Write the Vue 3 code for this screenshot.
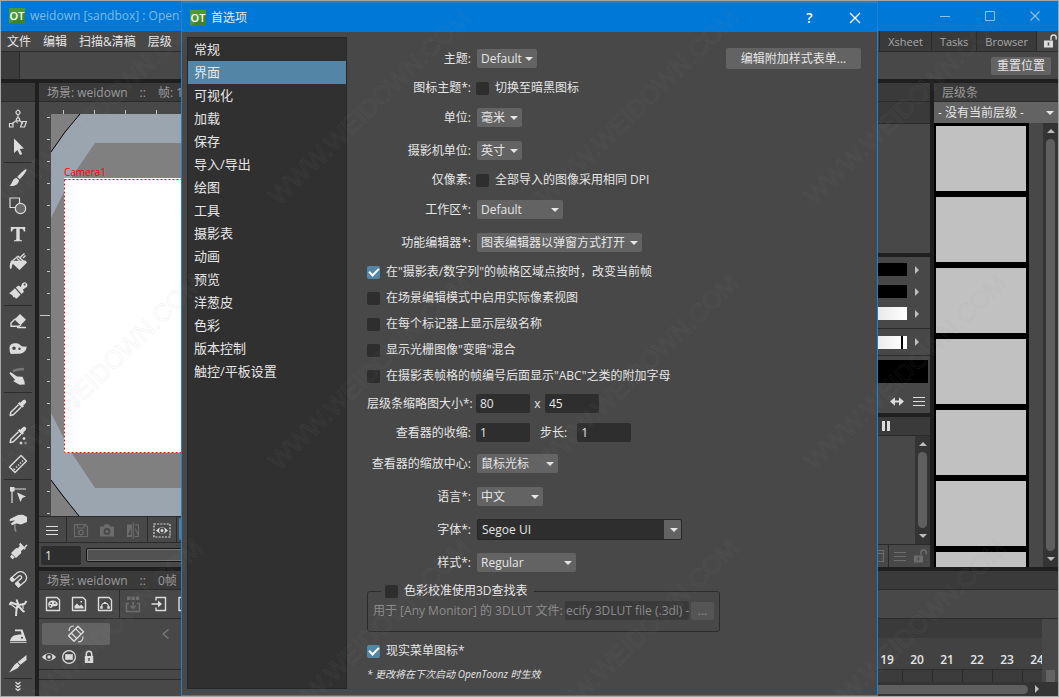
<script setup>
import { h, ref } from 'vue'

const F = '#dcdcdc'
const D = '#6c6c6c'
const s = (d, w = 1.2, c = F) => ['path', { d, fill: 'none', stroke: c, 'stroke-width': w, 'stroke-linejoin': 'round' }]
const f = (d, c = F) => ['path', { d, fill: c, 'fill-rule': 'evenodd' }]
const o = (cx, cy, r, w = 1.2, c = F, fill = 'none') => ['circle', { cx, cy, r, fill, stroke: c, 'stroke-width': w }]

const glyphs = {
  animate: [o(10, 3.5, 2), s('M10 5.5V9'), o(10, 10.5, 1.7), s('M8.5 11.5L3.5 15M11.7 11.5L15 14.5M10 0.5V2'), s('M1.5 14.5H5V18H1.5Z'), s('M14.5 12.5H18.5L16.5 18H12.5Z'), s('M8.5 12C8 13 9 14 10 14', 1)],
  select: [f('M6 1.5L16 11.5L11.8 12L14.2 17L12 18L9.5 13L6 16Z')],
  brush: [f('M18.3 1.3C19.5 2.5 14.5 8.5 11.8 11.2L9.3 8.8C12 6 17.3 0.4 18.3 1.3ZM8.5 9.8L11 12.3C11 15.5 7 19.2 1.5 17.8C4.5 16.5 3.5 11 8.5 9.8Z')],
  geometry: [s('M2 2H11.5V11.5H2Z'), o(12.5, 12.5, 5.2, 1.2, F, '#6a6a6a')],
  type: [f('M2.8 3H17.2V7.5H15.8C15.5 5.3 14.5 4.8 11.7 4.8V15C11.7 16 12.5 16.3 14 16.3V17.3H6V16.3C7.5 16.3 8.3 16 8.3 15V4.8C5.5 4.8 4.5 5.3 4.2 7.5H2.8Z')],
  fill: [f('M3 8.5C8 9.5 13 8 17.5 8.5L19 10.5L11.5 18L5 12C3.5 12.5 4.5 15.5 3 17C1.5 17 1.2 14 3 8.5Z'), s('M4.5 8.8L10 4.2L17.5 11M9 6.5L12 9M11.5 6L16.5 1.5M15 6L17.5 3.5', 1.4)],
  paint: [f('M18.5 3.2A2.6 2.6 0 0 0 14.2 3.6L12.7 7L10.5 5.5L7.8 7.5L13.5 14L16 11.8L14.8 9.7L17.5 7.8A2.6 2.6 0 0 0 18.5 3.2ZM16.5 3.5A1 1 0 1 1 15.8 5A1 1 0 0 1 16.5 3.5ZM6.9 8.3L12.6 14.8C10.8 16.2 10 18 8 18.8L6.5 17L5.5 17.5L4.6 15.5L1 13C3.5 12.5 4.5 10 6.9 8.3Z')],
  eraser: [f('M12 3L18 8.8L13 13.8L7 8Z'), s('M7 8L3 12V15.2H11L13 13.8M9 16.5H18M7 8L13 13.8', 1.4)],
  tape: [f('M1.5 9C1.5 5 5 3.8 9 4.2C12 4.5 12.5 7.5 15 7.5L19 7.8L18.3 9C18 13 14 14.5 11 14.8L3 15C1.8 14 1.5 11.5 1.5 9ZM6 7.5A1.8 1.8 0 1 0 6 11.1A1.8 1.8 0 1 0 6 7.5ZM11.5 8.5A1.2 1.2 0 1 0 11.5 10.9A1.2 1.2 0 1 0 11.5 8.5Z')],
  finger: [f('M2.5 5L9 9.5L14.5 9.8L16.5 14.5L16.8 17.5L11.5 17.8L5 14L7.2 13L1.5 6.5Z'), s('M5 4.5C8 2 12 2.5 16 2', 2.4, '#777777')],
  picker: [f('M17.5 2.2C19.2 4 17.5 5.8 15.2 7.2L16 8.2L14 9.8L9.8 5.6L11.5 4L12.5 4.8C14 2.5 16 0.8 17.5 2.2Z'), s('M10.5 6.7L2.8 14.3L2.2 17.4L5.3 16.8L13 9.2', 1.5)],
  rgbpicker: [f('M17.5 1.2C19.2 3 17.5 4.8 15.2 6.2L16 7.2L14 8.8L9.8 4.6L11.5 3L12.5 3.8C14 1.5 16 -0.2 17.5 1.2Z'), s('M10.5 5.7L2.8 13.3L2.2 16.4L5.3 15.8L13 8.2', 1.5), o(16, 12.5, 1, 1, F, F), o(13, 17, 1, 1, F, F), o(17.5, 17, 1, 1, '#888888', '#888888')],
  ruler: [s('M13 1.5L18.5 7L7 18.5L1.5 13Z', 1.4), s('M5.5 14.5L7 16M8 12.5L9.2 13.7M10 10.5L11.2 11.7M12 8.5L13.2 9.7M14 6.5L15.2 7.7', 1.1)],
  control: [s('M4 4H18M4 4V18', 1.2), f('M2 2H6.5V6.5H2Z'), f('M9 7.5L18 11.5L14.3 13L12.5 17Z')],
  pinch: [f('M19 4L15 1.8L10 2L2 6L1.5 8.2L7 7.2L2.8 10.8L4 12.2L8.5 10.5L13 11.5L19 9Z'), s('M6.5 11C8 13 5.5 15 8 18.5', 1.7, '#858585')],
  pump: [f('M12.3 1.8L17.8 7.5L16.4 8.8L15.4 7.9L13 10.2L13.3 12L8 17L3 12L8.2 7L9.8 7.2L12 4.8L11 3.3ZM3.7 13.5L6.8 16.5L4.5 18.2L2 15.7Z'), s('M16.5 6.5L19 4', 1.5)],
  magnet: [s('M2.5 9.5L9.5 3.5A6 6 0 0 1 17.5 12L10.5 18L7.5 14.5L13.5 9.2A1.8 1.8 0 0 0 11.2 6.8L5.2 12Z', 1.3), f('M1.5 10.3L4.5 7.8L7 10.8L4 13.3ZM6.8 14.6L9.8 12.2L12.8 15.6L10 18.2Z')],
  bender: [s('M8.5 2.5L10.5 8L16.5 7L18.5 4M10.5 8L3 5.5L1.5 8M9.5 8L8.5 12.5L8 19M10.5 9L15 14L16.5 15', 2), s('M2 6.5L9 12M15 6V12', 1.2)],
  iron: [f('M7 4.5H14.5L18.5 16H2C3 11.5 5.5 9.5 13.5 9.5L12.8 6.2H7ZM13 12V13.5H15V12Z'), s('M2 17.3H18.5', 1)],
  cutter: [f('M18.5 2V7L12.5 11.8L9.8 9ZM9.2 9.6L11.9 12.4L9.5 15.2L1 19.5L6.3 12Z')],
  chevrons: [s('M7.5 5L10 7.2L12.5 5M7.5 8.2L10 10.4L12.5 8.2M7.5 11.4L10 13.6L12.5 11.4', 1.3)],
  menu: [s('M4 6.5H16M4 10.5H16M4 14.5H16', 1.2)],
  menuDim: [s('M4 6.5H16M4 10.5H16M4 14.5H16', 1.2, D)],
  save: [s('M3.5 4.5H14L16.5 7V16.5H3.5ZM6.5 4.5V8H13V4.5', 1.2, D), o(10, 12.5, 2.3, 1.2, D)],
  camera: [f('M3 6.5H6.5L8 4.2H12L13.5 6.5H17V16.5H3ZM10 8A3.4 3.4 0 1 0 10 14.8A3.4 3.4 0 1 0 10 8ZM10 9.8A1.6 1.6 0 1 1 10 13A1.6 1.6 0 1 1 10 9.8Z', D)],
  compare: [f('M4 4.5H9V17H4ZM8 8L5 15H8Z', D), s('M11.5 5H15.5V16.5H11.5M10.3 2.5V18.5M12 8.5L15.5 15.5', 1.1, D)],
  safeEye: [['rect', { x: 2, y: 4, width: 16, height: 13, fill: 'none', stroke: F, 'stroke-width': 1.2, 'stroke-dasharray': '2 1.2' }], f('M4 10.5Q10 3.5 16 10.5Q10 17 4 10.5ZM10 7.6A2.9 2.9 0 1 0 10 13.4A2.9 2.9 0 1 0 10 7.6ZM10 9A1.5 1.5 0 1 1 10 12A1.5 1.5 0 1 1 10 9Z')],
  newPalette: [s('M3.5 3.5H14L16.5 6V16.5H3.5Z', 1.4), f('M10 6.5C6.8 6.5 5 8.5 5.3 11C5.5 13.5 8 14.5 9 13.5C9.5 13 9 12 10.5 12.2C13 12.5 14.8 12 14.8 10C14.5 7.8 12.5 6.5 10 6.5ZM7.4 8.5H9V10H7.4ZM11 8.5H12.5V10H11ZM6.5 11H8V12.5H6.5Z')],
  newRaster: [s('M3.5 3.5H14L16.5 6V16.5H3.5Z', 1.4), f('M5.5 14.5V12L8 9.5L10.5 12L12.2 10.5L14.5 13V14.5ZM11.5 7H13V8.5H11.5Z')],
  newVector: [s('M3.5 3.5H14L16.5 6V16.5H3.5Z', 1.4), s('M6.5 13.5C6.5 7.5 13.5 7.5 13.5 13.5', 1.1), f('M5.2 12.2H7.7V14.7H5.2ZM12.3 12.2H14.8V14.7H12.3ZM9 8H11V10H9Z')],
  dropDown: [f('M4 2.5H7.5V6H4ZM8.5 2.5H11.8V6H8.5ZM12.8 2.5H16.2V6H12.8Z', D), s('M6 9.5H3.5V17.5H16.5V9.5H14M10 8V14M7.5 11.8L10 14.3L12.5 11.8', 1.5, D)],
  intoBox: [s('M7 6.5V3.5H16.5V16.5H7V13.5M2.5 10H10', 1.4), f('M9 6.5L13 10L9 13.5Z')],
  sheet: [s('M4 3.5H13L16.5 6V16.5H4Z', 1.4)],
  flip: [s('M12 2.2L17.5 7.7L8 17.2L2.5 11.7Z', 1.4), s('M9.5 4.7L15 10.2M5.2 9L10.8 14.6M3 7C3 4 5 2 8 2M17 12.5C17 16 15 18 12 18', 1.2)],
  eye: [f('M3 10Q10 2.5 17 10Q10 17.5 3 10ZM10 6.7A3.3 3.3 0 1 0 10 13.3A3.3 3.3 0 1 0 10 6.7ZM10 8.3A1.7 1.7 0 1 1 10 11.7A1.7 1.7 0 1 1 10 8.3Z')],
  camstand: [o(10, 10, 6.4, 1.3), f('M6.2 7.2H13.8V12.8H6.2Z')],
  lock: [f('M5.8 9H14.2V16H5.8ZM9.3 11V14H10.7V11Z'), s('M7.3 9V7A2.7 2.7 0 0 1 12.7 7V9', 1.5)],
  unlock: [f('M4 9.5H13V16.5H4ZM7.7 11.5V14.5H9.2V11.5Z'), s('M11 9V6.5A2.6 2.6 0 0 1 16.2 6.5V8.5', 1.5)],
  unlockDim: [f('M4 9.5H13V16.5H4ZM7.7 11.5V14.5H9.2V11.5Z', D), s('M11 9V6.5A2.6 2.6 0 0 1 16.2 6.5V8.5', 1.5, D)],
  tableDim: [s('M3.5 4.5H15.5V15.5H3.5ZM3.5 7.5H15.5M9.5 4.5V7.5', 1.2, D)],
  spread: [f('M3 10.5L8 6.2V9.6H12V6.2L17 10.5L12 14.8V11.4H8V14.8Z')],
  pause: [f('M6 5H9V15H6ZM11 5H14V15H11Z')],
  previous: [s('M12.5 5.5L7 10L12.5 14.5', 1.4, '#7a7a7a')],
  minimize: [s('M5 10.5H15', 1, '#8fc3f0')],
  maximize: [s('M5.5 5.5H14.5V14.5H5.5Z', 1, '#8fc3f0')],
  closeDim: [s('M5.5 5.5L14.5 14.5M14.5 5.5L5.5 14.5', 1.1, '#8fc3f0')],
  close: [s('M5 5L15 15M15 5L5 15', 1.3, '#ffffff')],
}

const Icon = (p) =>
  h('svg', { viewBox: '0 0 20 20', width: 20, height: 20, 'aria-hidden': 'true' }, glyphs[p.name].map(([tag, attrs]) => h(tag, attrs)))
Icon.props = ['name']

const toolGroups = [
  ['animate', 'select'],
  ['brush', 'geometry', 'type', 'fill', 'paint'],
  ['eraser', 'tape', 'finger'],
  ['picker', 'rgbpicker', 'ruler'],
  ['control', 'pinch', 'pump', 'magnet', 'bender', 'iron', 'cutter'],
  ['chevrons'],
]
const menus = ['文件', '编辑', '扫描&清稿', '层级']
const rooms = ['Xsheet', 'Tasks', 'Browser']
const pages = ['常规', '界面', '可视化', '加载', '保存', '导入/导出', '绘图', '工具', '摄影表', '动画', '预览', '洋葱皮', '色彩', '版本控制', '触控/平板设置']
const current = ref('界面')
const options = ref([
  { text: '在"摄影表/数字列"的帧格区域点按时，改变当前帧', on: true },
  { text: '在场景编辑模式中启用实际像素视图', on: false },
  { text: '在每个标记器上显示层级名称', on: false },
  { text: '显示光栅图像"变暗"混合', on: false },
  { text: '在摄影表帧格的帧编号后面显示"ABC"之类的附加字母', on: false },
])
const topTicks = Array.from({ length: 24 }, (_, i) => 24 + i * 31)
const sideTicks = Array.from({ length: 19 }, (_, i) => 3 + i * 22)
const marks = [205, 470, 735].flatMap((y) => [10, 278, 546, 814].map((x) => ({ x, y })))
</script>

<template>
  <div class="desktop">
    <header class="titlebar">
      <svg class="logo" viewBox="0 0 16 16" aria-hidden="true"><rect width="16" height="16" fill="#4a9a35" /><path d="M0 16L16 5V16Z" fill="#3b8429" /><text x="8" y="12" text-anchor="middle">OT</text></svg>
      <span class="app-name">weidown [sandbox] : OpenToonz</span>
      <button aria-label="Minimize"><Icon name="minimize" /></button>
      <button aria-label="Maximize"><Icon name="maximize" /></button>
      <button aria-label="Close window"><Icon name="closeDim" /></button>
    </header>
    <nav class="menubar">
      <button v-for="m in menus" :key="m" class="menu">{{ m }}</button>
      <span class="grow"></span>
      <button v-for="r in rooms" :key="r" class="room">{{ r }}</button>
      <button class="room-lock" aria-label="Lock rooms"><Icon name="unlock" /></button>
    </nav>
    <div class="options"><span class="grip"></span><button class="btn">重置位置</button></div>

    <div class="workspace">
      <aside class="toolbox">
        <div class="pane-head"></div>
        <div v-for="(g, i) in toolGroups" :key="i" class="tool-group">
          <button v-for="t in g" :key="t" class="tool" :class="{ short: t === 'chevrons' }" :aria-label="t"><Icon :name="t" /></button>
        </div>
      </aside>

      <div class="main">
        <div class="upper">
          <section class="viewer">
            <div class="pane-head"><span>场景: weidown</span><span>::</span><span>帧: 1</span></div>
            <div class="stage">
              <svg class="ruler-top" aria-hidden="true"><path v-for="x in topTicks" :key="x" :d="`M${x}.5 8V12`" stroke="#c8c8c8" /></svg>
              <svg class="ruler-side" aria-hidden="true"><path v-for="y in sideTicks" :key="y" :d="`M${y === 201 ? 1 : 8} ${y}.5H11`" stroke="#c8c8c8" /></svg>
              <svg class="canvas" aria-hidden="true">
                <path d="M29 0L14 18L0 38V104L20 64L44 29H900V0Z" fill="#9aa5b0" />
                <path d="M0 299L20 338L44 374H900V402H28L12 382L0 366Z" fill="#9aa5b0" />
                <path d="M29 0L14 18L0 38M0 366L12 382L28 402" fill="none" stroke="#000" />
                <rect x="13" y="64" width="480" height="275" fill="#fff" />
                <rect x="13.5" y="65.5" width="480" height="273" fill="none" stroke="#f00" stroke-dasharray="2 2" />
                <text x="13" y="62" class="cam">Camera1</text>
              </svg>
            </div>
            <div class="view-tools">
              <span class="cell"><button aria-label="Menu"><Icon name="menu" /></button></span>
              <span class="cell"><button v-for="n in ['save', 'camera', 'compare']" :key="n" :aria-label="n"><Icon :name="n" /></button></span>
              <span class="cell"><button aria-label="Safe area"><Icon name="safeEye" /></button></span>
              <button class="active" aria-label="Camera view"></button>
            </div>
            <div class="framebar"><input class="field" aria-label="Frame" value="1" /><span class="slider"></span></div>
          </section>

          <section class="style-col">
            <div class="style-pane">
              <div class="pane-head"></div>
              <div class="tabs"></div>
              <div class="wheel"></div>
            </div>
            <div class="sliders">
              <div class="chan"><i class="black"></i><b></b></div>
              <div class="chan"><i class="black"></i><b></b></div>
              <div class="chan"><i class="white"></i><b></b></div>
              <div class="chan split"><i class="white knob"></i><b></b></div>
              <div class="swatch"></div>
              <div class="pal-tools"><Icon name="spread" /><Icon name="menu" /></div>
            </div>
            <div class="palette">
              <div class="pane-head"><Icon name="pause" /></div>
              <div class="pal-body"><div class="vscroll"><em class="up"></em><span></span><em class="down"></em></div></div>
              <div class="pal-foot"><Icon name="tableDim" /><u></u><Icon name="menuDim" /><Icon name="unlockDim" /></div>
            </div>
          </section>

          <section class="strip">
            <div class="pane-head">层级条</div>
            <span class="combo wide"><select aria-label="层级"><option>- 没有当前层级 -</option></select></span>
            <div class="strip-body">
              <div class="thumbs"><div v-for="n in 7" :key="n"></div></div>
              <div class="vscroll"><em class="up"></em><span></span><em class="down"></em></div>
            </div>
          </section>
        </div>

        <section class="timeline">
          <div class="pane-head"><span>场景: weidown</span><span>::</span><span>0帧</span></div>
          <div class="time-tools">
            <span class="cell"><button v-for="n in ['newPalette', 'newRaster', 'newVector']" :key="n" :aria-label="n"><Icon :name="n" /></button></span>
            <button v-for="n in ['dropDown', 'intoBox', 'sheet']" :key="n" :aria-label="n"><Icon :name="n" /></button>
          </div>
          <div class="time-body">
            <div class="layers">
              <div class="layer-top"><button class="flip" aria-label="Flip"><Icon name="flip" /></button><button class="prev" aria-label="Previous"><Icon name="previous" /></button><Icon name="lock" /></div>
              <div class="layer-icons"><Icon name="eye" /><Icon name="camstand" /><Icon name="lock" /></div>
              <div class="layer-row"></div>
            </div>
            <div class="frames">
              <div class="frame-top"></div>
              <div class="numbers"><span v-for="n in 24" :key="n">{{ n }}</span></div>
              <div class="cells"><span v-for="n in 24" :key="n"></span></div>
              <div class="hscroll"><span></span><em></em></div>
            </div>
            <div class="corner"><span></span></div>
          </div>
        </section>
      </div>
    </div>

    <section class="dialog" role="dialog" aria-label="首选项">
      <header class="dlg-title">
        <svg class="logo" viewBox="0 0 16 16" aria-hidden="true"><rect width="16" height="16" fill="#4a9a35" /><path d="M0 16L16 5V16Z" fill="#3b8429" /><text x="8" y="12" text-anchor="middle">OT</text></svg>
        <span class="app-name">首选项</span>
        <button class="help">?</button>
        <button aria-label="Close"><Icon name="close" /></button>
      </header>
      <div class="dlg-body">
        <ul class="pages">
          <li v-for="p in pages" :key="p"><button :class="{ on: p === current }" @click="current = p">{{ p }}</button></li>
        </ul>
        <form class="prefs" @submit.prevent>
          <div class="row combo-row">
            <label class="name" for="theme">主题:</label>
            <span class="combo w60"><select id="theme"><option>Default</option></select></span>
            <button class="btn sheet-btn">编辑附加样式表单...</button>
          </div>
          <div class="row check-row"><span class="name">图标主题*:</span><label class="check"><input type="checkbox" />切换至暗黑图标</label></div>
          <div class="row combo-row"><label class="name" for="unit">单位:</label><span class="combo w45"><select id="unit"><option>毫米</option></select></span></div>
          <div class="row combo-row"><label class="name" for="camunit">摄影机单位:</label><span class="combo w45"><select id="camunit"><option>英寸</option></select></span></div>
          <div class="row check-row"><span class="name">仅像素:</span><label class="check"><input type="checkbox" />全部导入的图像采用相同 DPI</label></div>
          <div class="row combo-row"><label class="name" for="rooms">工作区*:</label><span class="combo w86"><select id="rooms"><option>Default</option></select></span></div>
          <div class="row combo-row"><label class="name" for="fx">功能编辑器*:</label><span class="combo w165"><select id="fx"><option>图表编辑器以弹窗方式打开</option></select></span></div>
          <div v-for="c in options" :key="c.text" class="row check-row"><label class="check"><input v-model="c.on" type="checkbox" />{{ c.text }}</label></div>
          <div class="row input-row"><label class="name" for="tw">层级条缩略图大小*:</label><input id="tw" class="field" value="80" /><label class="by" for="th">x</label><input id="th" class="field" value="45" /></div>
          <div class="row input-row"><label class="name" for="shrink">查看器的收缩:</label><input id="shrink" class="field" value="1" /><label class="step" for="step">步长:</label><input id="step" class="field" value="1" /></div>
          <div class="row combo-row"><label class="name" for="zoom">查看器的缩放中心:</label><span class="combo w81"><select id="zoom"><option>鼠标光标</option></select></span></div>
          <div class="row combo-row"><label class="name" for="lang">语言*:</label><span class="combo w66"><select id="lang"><option>中文</option></select></span></div>
          <div class="row combo-row"><label class="name" for="font">字体*:</label><span class="combo font"><select id="font"><option>Segoe UI</option></select></span></div>
          <div class="row combo-row"><label class="name" for="face">样式*:</label><span class="combo w99"><select id="face"><option>Regular</option></select></span></div>
          <fieldset>
            <legend><label class="check"><input type="checkbox" />色彩校准使用3D查找表</label></legend>
            <div class="lut-row">
              <label for="lut">用于 [Any Monitor] 的 3DLUT 文件:</label>
              <input id="lut" value="ecify 3DLUT file (.3dl) -" disabled />
              <button class="btn" disabled>...</button>
            </div>
          </fieldset>
          <div class="row check-row"><label class="check"><input type="checkbox" checked />现实菜单图标*</label></div>
          <p class="note">* 更改将在下次启动 OpenToonz 时生效</p>
        </form>
      </div>
    </section>

    <svg class="marks" aria-hidden="true">
      <text v-for="m in marks" :key="m.x + '-' + m.y" :transform="`translate(${m.x} ${m.y}) rotate(-44)`">WWW.WEIDOWN.COM</text>
    </svg>
  </div>
</template>

<style>
body { background: #484848; }
</style>

<style scoped>
* { box-sizing: border-box; }
.desktop { position: relative; min-height: 100vh; display: flex; flex-direction: column; border: 1px solid #a6a6a6; background: #484848; color: #e6e6e6; font: 12px/18px "Open Sans", "Noto Sans CJK SC", sans-serif; white-space: nowrap; overflow: hidden; }
button, input, select { font: inherit; color: inherit; border: 0; margin: 0; padding: 0; background: none; border-radius: 0; }
button { display: flex; align-items: center; justify-content: center; }
svg { display: block; flex: none; }
.grow { flex: 1; }

.titlebar, .dlg-title { display: flex; align-items: center; height: 30px; background: #0078d7; padding-left: 8px; flex: none; }
.titlebar { padding-right: 1px; }
.logo { width: 16px; height: 16px; }
.logo text { font: 600 11px "Open Sans", sans-serif; fill: #fff; }
.app-name { flex: 1; margin-left: 5px; }
.titlebar .app-name { color: #80bbeb; }
.titlebar button { width: 45px; height: 30px; }

.menubar { display: flex; height: 21px; flex: none; border-bottom: 1px solid #2b2b2b; }
.menu { padding: 2px 6px 0; }
.room { background: #3a3a3a; color: #a8a8a8; border-left: 1px solid #2b2b2b; padding: 1px 8px 0; font-size: 11px; }
.room-lock { width: 22px; border-left: 1px solid #2b2b2b; padding-left: 4px; }
.options { display: flex; align-items: center; justify-content: space-between; height: 27px; padding-right: 7px; flex: none; }
.grip { width: 19px; height: 27px; background: #3c3c3c; border-right: 1px solid #2b2b2b; }
.btn { background: #636363; border-radius: 2px; height: 18px; padding: 0 6px; }

.workspace { flex: 1; display: flex; gap: 4px; border-top: 4px solid #1f1f1f; background: #1f1f1f; }
.toolbox { width: 34px; background: #484848; flex: none; }
.pane-head { height: 19px; background: #3a3a3a; border-bottom: 1px solid #2b2b2b; color: #9a9a9a; padding: 1px 0 0 8px; display: flex; align-items: center; gap: 12px; flex: none; }
.tool-group { margin: 0 3px; padding: 1px 0; }
.toolbox .pane-head + .tool-group { padding-top: 3px; }
.tool-group + .tool-group { border-top: 1px solid #2b2b2b; }
.tool { width: 28px; height: 28px; }
.tool.short { height: 14px; }

.main { flex: 1; min-width: 0; display: flex; flex-direction: column; gap: 4px; }
.upper { flex: 1; display: flex; gap: 4px; min-height: 484px; }
.viewer { flex: 1; min-width: 0; background: #484848; display: flex; flex-direction: column; }
.stage { flex: 1; display: grid; grid-template: 12px 1fr / 12px 1fr; }
.ruler-top { grid-area: 1 / 1 / 2 / 3; width: 100%; height: 12px; }
.ruler-side { width: 12px; height: 100%; }
.canvas { width: 100%; height: 100%; background: #808080; }
.cam { font: 10px "Open Sans", sans-serif; fill: #f00; }
.view-tools { height: 27px; border-top: 1px solid #2b2b2b; border-bottom: 1px solid #2b2b2b; display: flex; }
.cell { display: flex; border-right: 1px solid #2b2b2b; padding: 0 1px; }
.view-tools .cell:first-child { padding-left: 0; }
.view-tools button, .time-tools button { width: 26px; height: 25px; }
.view-tools .active { background: #4f7f9f; margin: 1px 2px; width: 26px; height: 22px; border-radius: 2px; }
.field { background: #2e2e2e; border-radius: 2px; height: 19px; width: 54px; padding: 0 4px; }
.framebar { display: flex; align-items: center; height: 24px; padding-left: 2px; gap: 5px; }
.framebar .field { width: 40px; }
.slider { flex: 1; height: 14px; border: 1px solid #151515; outline: 1px solid #777; outline-offset: -2px; background: #525252; border-radius: 2px; }

.style-col { width: 200px; display: flex; flex-direction: column; gap: 4px; flex: none; }
.style-pane { height: 170px; background: #484848; }
.tabs { height: 22px; background: #3a3a3a; border-bottom: 1px solid #2b2b2b; }
.sliders { background: #484848; padding-top: 6px; height: 156px; }
.chan { display: flex; align-items: center; height: 13px; margin-bottom: 9px; }
.chan i { flex: 1; height: 13px; }
.chan b { width: 0; margin: 0 11px 0 8px; border: 4px solid transparent; border-left-color: #bdbdbd; border-right: 0; }
.black { background: #000; }
.white { background: linear-gradient(90deg, #777, #fff); }
.split { height: 28px; margin-top: -1px; margin-bottom: 4px; border-top: 1px solid #2b2b2b; border-bottom: 1px solid #2b2b2b; }
.knob { border-right: 4px solid #fff; box-shadow: inset -2px 0 #000; }
.swatch { height: 23px; background: #000; margin-right: 2px; }
.pal-tools { display: flex; justify-content: flex-end; gap: 2px; padding: 8px 1px 0 0; }
.palette { flex: 1; background: #484848; display: flex; flex-direction: column; }
.palette .pane-head { padding: 0 0 0 146px; }
.pal-body { flex: 1; display: flex; justify-content: flex-end; }
.pal-foot { height: 23px; border-top: 1px solid #2b2b2b; display: flex; align-items: center; justify-content: flex-end; }
.pal-foot u { width: 1px; height: 22px; background: #2b2b2b; margin-right: 1px; }
.vscroll { width: 15px; background: #343434; display: flex; flex-direction: column; align-items: center; padding: 6px 0; gap: 6px; }
.vscroll span { flex: 1; width: 9px; border-radius: 5px; background: #5f5f5f; }
.up, .down { border: 4px solid transparent; }
.up { border-top: 0; border-bottom-color: #bdbdbd; }
.down { border-bottom: 0; border-top-color: #bdbdbd; }

.strip { width: 124px; display: flex; flex-direction: column; background: #484848; flex: none; }
.strip-body { flex: 1; display: flex; justify-content: space-between; }
.thumbs { background: #000; padding: 3px 3px 0 2px; width: 95px; height: 444px; display: flex; flex-direction: column; gap: 6px; overflow: hidden; }
.thumbs div { height: 65px; background: #c1c1c1; flex: none; }

.timeline { background: #484848; height: 125px; flex: none; display: flex; flex-direction: column; }
.time-tools { height: 29px; border-bottom: 1px solid #2b2b2b; display: flex; align-items: center; flex: none; }
.time-tools .cell { height: 28px; align-items: center; }
.time-body { flex: 1; display: flex; }
.layers { width: 293px; flex: none; }
.layer-top { display: flex; align-items: center; padding: 4px 3px 0; }
.flip { width: 68px; height: 22px; background: #636363; border-radius: 2px; }
.prev { margin-left: 46px; width: 20px; }
.layer-icons { display: flex; align-items: center; height: 24px; }
.layer-row { height: 11px; border-top: 1px solid #2b2b2b; border-bottom: 1px solid #2b2b2b; }
.frames { flex: 1; min-width: 0; overflow: hidden; }
.frame-top { height: 19px; background: #3a3a3a; }
.numbers { display: flex; height: 32px; background: #424242; border-bottom: 1px solid #2b2b2b; align-items: flex-end; }
.numbers span { width: 30px; flex: none; text-align: center; font-weight: 600; }
.cells { display: flex; height: 12px; background: #3c3c3c; }
.cells span { width: 30px; flex: none; border-left: 1px solid #2b2b2b; }
.hscroll { display: flex; align-items: center; gap: 7px; height: 14px; background: #343434; padding-right: 3px; }
.hscroll span { flex: 1; height: 9px; border-radius: 5px; background: #5f5f5f; }
.hscroll em { border: 4px solid transparent; border-left-color: #bdbdbd; border-right: 0; }
.corner { width: 16px; border-bottom: 14px solid #343434; display: flex; align-items: flex-end; justify-content: center; flex: none; }
.corner span { width: 9px; height: 12px; background: #636363; }

.dialog { position: absolute; inset: 0 180px; border: 1px solid #1c82d4; border-top: 2px solid #1c82d4; background: #484848; display: flex; flex-direction: column; }
.dlg-title { height: 29px; }
.dlg-title button { width: 45px; height: 28px; color: #fff; }
.dlg-title .help { font-weight: 600; font-size: 14px; }
.dlg-body { flex: 1; display: flex; padding: 5px 16px 6px 5px; gap: 20px; }
.pages { list-style: none; margin: 0; padding: 0; width: 160px; background: #303030; border: 1px solid #262626; flex: none; }
.pages button { width: 100%; height: 23px; justify-content: flex-start; padding: 0 0 1px 6px; font-size: 13px; }
.pages .on { background: #5385a6; }
.prefs { flex: 1; min-width: 0; display: flex; flex-direction: column; gap: 6px; padding-top: 8px; }
.row { display: flex; align-items: center; }
.combo-row { height: 27px; }
.check-row { height: 20px; }
.input-row { height: 23px; }
.name { width: 104px; margin-right: 6px; text-align: right; flex: none; }
.check-row .name, .input-row .name { margin-right: 5px; }
.sheet-btn { margin-left: auto; height: 21px; width: 135px; }
.check { display: flex; align-items: center; gap: 6px; }
.check input { appearance: none; width: 13px; height: 13px; border-radius: 2px; background: #2e2e2e; }
.check input:checked { background: #5385a6; display: grid; place-items: center; }
.check input:checked::after { content: ""; width: 8px; height: 4px; border: solid #fff; border-width: 0 0 2px 2px; transform: rotate(-45deg); margin-bottom: 3px; }
.combo { position: relative; display: block; }
.combo select { appearance: none; width: 100%; height: 19px; background: #636363; border-radius: 2px; padding-left: 4px; line-height: 19px; display: block; }
.combo::after { content: ""; position: absolute; right: 4px; top: 50%; margin-top: -2px; border: 4px solid transparent; border-top-color: #e6e6e6; border-bottom: 0; pointer-events: none; }
.w45 { width: 45px; }
.w60 { width: 60px; }
.w66 { width: 66px; }
.w81 { width: 81px; }
.w86 { width: 86px; }
.w99 { width: 99px; }
.w165 { width: 165px; }
.font { width: 205px; }
.font select { height: 21px; background: linear-gradient(#636363, #636363) right / 17px 100% no-repeat, #2e2e2e; border: 1px solid #262626; }
.wide select { height: 21px; border-radius: 0; }
.by { width: 15px; text-align: center; }
.step { margin: 0 10px; }
fieldset { margin: 1px 0 0; min-width: 0; width: 353px; height: 49px; border: 1px solid #2b2b2b; border-radius: 3px; padding: 2px 5px 0; color: #8c8c8c; }
legend { color: #e6e6e6; padding: 0 6px 0 4px; margin-left: 8px; line-height: 16px; }
.lut-row { display: flex; align-items: center; gap: 2px; }
.lut-row input { background: #3a3a3a; width: 124px; height: 19px; padding-left: 1px; border-radius: 2px; }
.lut-row label { flex: 1; }
.lut-row .btn { width: 23px; height: 18px; background: #555; color: #8c8c8c; }
fieldset + .row { margin-top: 3px; }
.note { margin: 0; font-size: 10px; line-height: 14px; font-style: italic; }

.marks { position: absolute; inset: 0; width: 100%; height: 100%; pointer-events: none; }
.marks text { font: 25px "Liberation Sans", sans-serif; fill: none; stroke: #969696; stroke-opacity: 0.1; stroke-width: 1; }
</style>
